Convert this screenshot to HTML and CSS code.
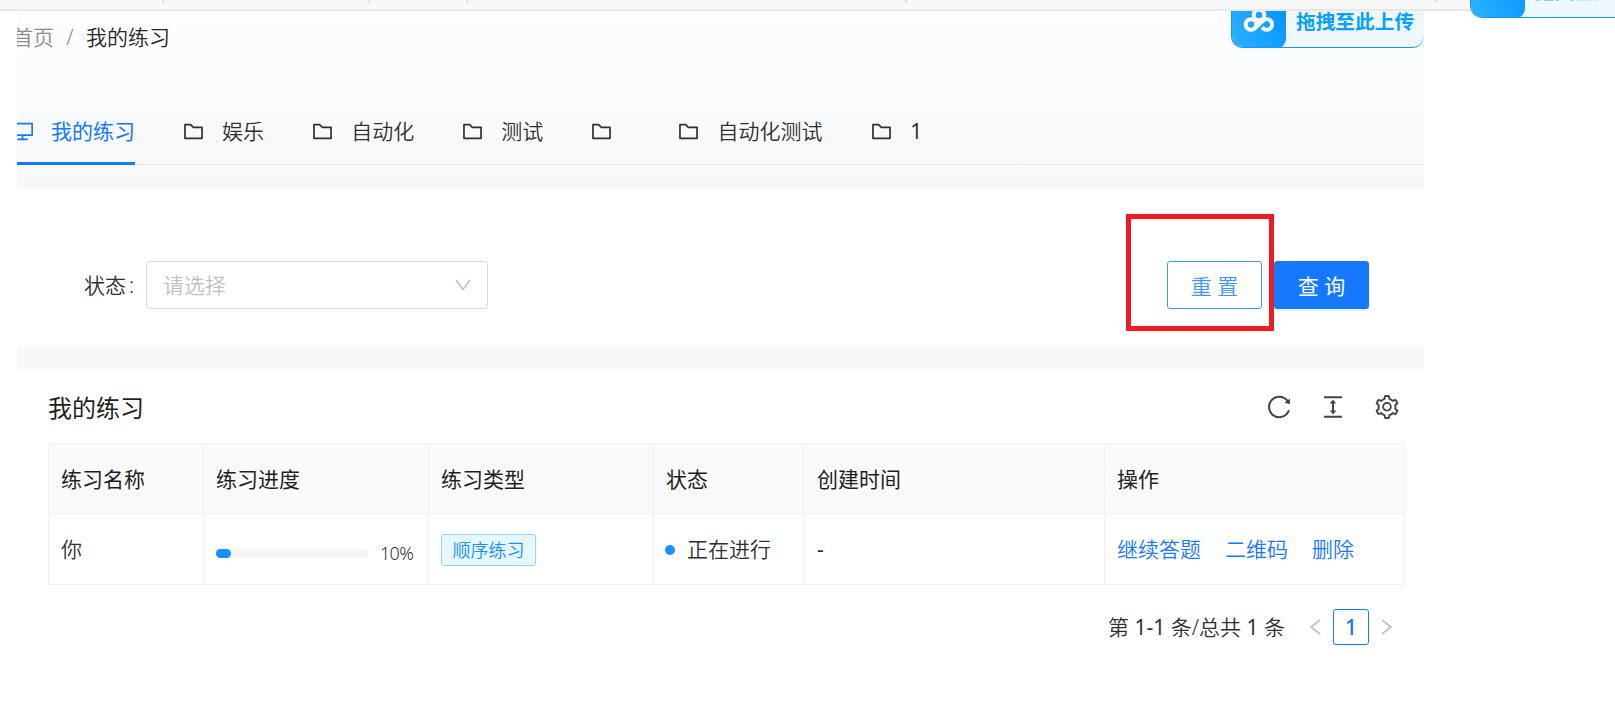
FILE: index.html
```html
<!DOCTYPE html>
<html lang="zh-CN">
<head>
<meta charset="utf-8">
<title>我的练习</title>
<link rel="stylesheet" href="styles.css">
</head>
<body>
<svg width="0" height="0" class="defs">
  <symbol id="folder" viewBox="64 64 896 896"><path d="M880 298.400H521L403.700 186.200a8.150 8.150 0 0 0-5.500-2.200H144c-17.700 0-32 14.300-32 32v592c0 17.700 14.300 32 32 32h736c17.700 0 32-14.300 32-32V330.400c0-17.700-14.300-32-32-32zM840 768H184V256h188.500l119.600 114.400H840V768z"/></symbol>
  <symbol id="cloud" viewBox="0 0 32 26"><g fill="none" stroke="#fff" stroke-width="4"><circle cx="8" cy="17.500" r="5.300"/><circle cx="16" cy="8" r="5.300"/><path d="M11.800 21.300 20 13.700a5.300 5.300 0 1 1 0 7.600l-1-1"/></g></symbol>
</svg>
<header class="strip"><i class="tick t1"></i><i class="tick t2"></i><i class="tick t3"></i><i class="tick t4"></i><i class="tick t5"></i></header>
<div class="upload outer"><span class="tile"><svg><use href="#cloud"/></svg></span><span class="uptext">拖拽至此上传</span></div>
<main class="page">
  <section class="head">
    <div class="upload inner"><span class="tile"><svg><use href="#cloud"/></svg></span><span class="uptext">拖拽至此上传</span></div>
    <nav class="crumb"><span>首页</span><span class="slash">/</span><b>我的练习</b></nav>
    <div class="tabs">
      <div class="tab active"><svg viewBox="64 64 896 896"><path d="M928 140H96c-17.700 0-32 14.300-32 32v496c0 17.700 14.300 32 32 32h380v112H304c-8.800 0-16 7.200-16 16v48c0 4.400 3.600 8 8 8h432c4.400 0 8-3.600 8-8v-48c0-8.800-7.200-16-16-16H548V700h380c17.700 0 32-14.300 32-32V172c0-17.700-14.300-32-32-32zm-40 488H136V212h752v416z"/></svg><span>我的练习</span></div>
      <div class="tab"><svg><use href="#folder"/></svg><span>娱乐</span></div>
      <div class="tab"><svg><use href="#folder"/></svg><span>自动化</span></div>
      <div class="tab"><svg><use href="#folder"/></svg><span>测试</span></div>
      <div class="tab"><svg><use href="#folder"/></svg><span></span></div>
      <div class="tab"><svg><use href="#folder"/></svg><span>自动化测试</span></div>
      <div class="tab"><svg><use href="#folder"/></svg><span class="num">1</span></div>
    </div>
  </section>
  <section class="filter">
    <label>状态<span class="colon">:</span></label>
    <div class="select"><span>请选择</span><svg viewBox="0 0 16 12"><path d="M1 1 8 10.500 15 1"/></svg></div>
    <div class="buttons"><button class="btn">重 置</button><button class="btn primary">查 询</button><div class="mark"></div></div>
  </section>
  <section class="card">
    <div class="title"><h2>我的练习</h2>
      <div class="tools">
        <svg viewBox="64 64 896 896"><path d="M909.100 209.300l-56.400 44.100C775.800 155.100 656.200 92 521.900 92 290 92 102.300 279.500 102 511.500 101.700 743.700 289.800 932 521.900 932c181.300 0 335.800-115 394.600-276.100 1.500-4.200-.7-8.900-4.900-10.300l-56.700-19.500a8 8 0 0 0-10.100 4.800c-1.800 5-3.800 10-5.900 14.900-17.300 41-42.100 77.800-73.700 109.400A344.770 344.770 0 0 1 655.900 829c-42.300 17.900-87.400 27-133.800 27-46.500 0-91.500-9.100-133.800-27A341.500 341.500 0 0 1 279 755.200a342.160 342.160 0 0 1-73.700-109.400c-17.900-42.400-27-87.400-27-133.900s9.100-91.500 27-133.900c17.300-41 42.100-77.800 73.700-109.400 31.600-31.600 68.400-56.400 109.300-73.800 42.300-17.900 87.400-27 133.800-27 46.500 0 91.500 9.100 133.800 27a341.500 341.500 0 0 1 109.300 73.800c9.900 9.900 19.200 20.400 27.800 31.400l-60.200 47a8 8 0 0 0 3 14.100l175.600 43c5 1.200 9.900-2.600 9.900-7.700l.8-180.900c-.1-6.600-7.800-10.300-13-6.200z"/></svg>
        <svg viewBox="64 64 896 896"><path d="M840 836H184c-4.400 0-8 3.600-8 8v60c0 4.400 3.600 8 8 8h656c4.400 0 8-3.600 8-8v-60c0-4.400-3.600-8-8-8zm0-724H184c-4.400 0-8 3.600-8 8v60c0 4.400 3.600 8 8 8h656c4.400 0 8-3.600 8-8v-60c0-4.400-3.600-8-8-8zM610.800 378c6 0 9.400-7 5.700-11.700L515.700 238.700a7.140 7.140 0 0 0-11.300 0L403.600 366.300a7.230 7.230 0 0 0 5.700 11.700H476v268h-62.800c-6 0-9.400 7-5.700 11.700l100.800 127.500c2.900 3.700 8.500 3.700 11.300 0l100.800-127.500c3.700-4.700.4-11.700-5.700-11.700H548V378h62.800z"/></svg>
        <svg viewBox="64 64 896 896"><path d="M924.800 625.700l-65.500-56c3.100-19 4.700-38.400 4.700-57.800s-1.600-38.800-4.700-57.800l65.500-56a32.030 32.030 0 0 0 9.300-35.200l-.9-2.600a443.740 443.740 0 0 0-79.700-137.900l-1.800-2.100a32.120 32.120 0 0 0-35.100-9.500l-81.300 28.900c-30-24.600-63.500-44-99.700-57.600l-15.700-85a32.050 32.050 0 0 0-25.800-25.700l-2.700-.5c-52.100-9.400-106.900-9.400-159 0l-2.700.5a32.050 32.050 0 0 0-25.800 25.700l-15.800 85.400a351.860 351.860 0 0 0-99 57.400l-81.900-29.100a32 32 0 0 0-35.100 9.500l-1.800 2.100a446.020 446.020 0 0 0-79.700 137.900l-.9 2.600c-4.500 12.500-.8 26.500 9.300 35.200l66.300 56.600c-3.100 18.800-4.600 38-4.600 57.100 0 19.200 1.500 38.400 4.600 57.100L99 625.500a32.030 32.030 0 0 0-9.300 35.200l.9 2.600c18.100 50.400 44.900 96.900 79.700 137.900l1.800 2.100a32.120 32.120 0 0 0 35.100 9.500l81.900-29.100c29.800 24.500 63.100 43.900 99 57.400l15.800 85.400a32.050 32.050 0 0 0 25.800 25.700l2.700.5a449.400 449.400 0 0 0 159 0l2.700-.5a32.050 32.050 0 0 0 25.800-25.700l15.700-85a350 350 0 0 0 99.700-57.600l81.300 28.900a32 32 0 0 0 35.100-9.500l1.800-2.100c34.800-41.100 61.600-87.500 79.700-137.900l.9-2.600c4.500-12.300.8-26.300-9.300-35zM788.300 465.900c2.500 15.100 3.800 30.600 3.800 46.100s-1.300 31-3.800 46.100l-6.600 40.100 74.700 63.900a370.030 370.030 0 0 1-42.600 73.600L721 702.800l-31.400 25.800c-23.900 19.600-50.500 35-79.300 45.800l-38.100 14.300-17.900 97a377.500 377.500 0 0 1-85 0l-17.900-97.200-37.800-14.500c-28.500-10.800-55-26.200-78.700-45.700l-31.400-25.900-93.400 33.200c-17-22.900-31.200-47.600-42.600-73.600l75.500-64.500-6.500-40c-2.400-14.900-3.700-30.300-3.700-45.500 0-15.300 1.200-30.600 3.700-45.500l6.500-40-75.500-64.500c11.300-26.100 25.600-50.700 42.600-73.600l93.400 33.200 31.400-25.900c23.700-19.500 50.200-34.900 78.700-45.700l37.900-14.300 17.900-97.200c28.100-3.200 56.800-3.200 85 0l17.900 97 38.100 14.300c28.700 10.800 55.400 26.200 79.300 45.800l31.400 25.800 92.800-32.900c17 22.900 31.200 47.600 42.600 73.600L781.800 426l6.500 39.900zM512 326c-97.200 0-176 78.800-176 176s78.800 176 176 176 176-78.800 176-176-78.800-176-176-176zm79.200 255.200A111.600 111.600 0 0 1 512 614c-29.900 0-58-11.700-79.200-32.800A111.600 111.600 0 0 1 400 502c0-29.900 11.700-58 32.800-79.200C454 401.600 482.100 390 512 390c29.900 0 58 11.600 79.200 32.800A111.600 111.600 0 0 1 624 502c0 29.900-11.700 58-32.800 79.200z"/></svg>
      </div>
    </div>
    <div class="table">
      <div class="th">练习名称</div><div class="th">练习进度</div><div class="th">练习类型</div><div class="th">状态</div><div class="th">创建时间</div><div class="th">操作</div>
      <div class="td">你</div>
      <div class="td"><div class="progress"><div class="bar"><div class="fill" style="width:10%"></div></div><span>10%</span></div></div>
      <div class="td"><span class="tag">顺序练习</span></div>
      <div class="td"><i class="dot"></i>正在进行</div>
      <div class="td dash">-</div>
      <div class="td links"><a>继续答题</a><a>二维码</a><a>删除</a></div>
    </div>
    <div class="pager"><span class="total">第 <span class="num">1-1</span> 条/总共 <span class="num">1</span> 条</span><svg viewBox="0 0 12 16"><path d="M11 1 2 8l9 7"/></svg><b>1</b><svg viewBox="0 0 12 16"><path d="M1 1l9 7-9 7"/></svg></div>
  </section>
</main>
</body>
</html>
```

FILE: styles.css
```css
* { box-sizing: border-box; }
body { margin: 0; width: 1615px; height: 711px; overflow: hidden; position: relative; background: #fff; color: #303030; font: 350 21px/33px "Noto Sans", "Noto Sans CJK SC", sans-serif; }
.defs { position: absolute; }
.num { font-weight: 400; }
.strip { height: 11px; background: #f8f8f8; border-bottom: 2px solid #e8e8e8; position: relative; }
.tick { position: absolute; top: 0; width: 2px; height: 3px; background: #e2e2e2; }
.t1 { left: 162px; } .t2 { left: 368px; } .t3 { left: 466px; } .t4 { left: 905px; } .t5 { left: 1435px; }
.page { width: 1407px; margin-left: 17px; }
.head { height: 178px; position: relative; overflow: hidden; background: linear-gradient(#fdfdfd, #fafbfd 40%, #f7f8fa); }
.crumb { display: flex; padding-top: 10px; margin-left: -5px; color: #8c8c8c; }
.crumb b { font-weight: inherit; color: #262626; }
.slash { width: 32px; text-align: center; }
.tabs { display: flex; gap: 48.100px; height: 69px; margin-top: 42px; margin-left: -5px; border-bottom: 1px solid #e6e7ea; }
.tab { display: flex; gap: 18px; align-items: center; height: 69px; padding-top: 2px; flex: none; }
.tab:last-child { margin-left: .6px; }
.tab svg { width: 21px; height: 21px; fill: currentColor; }
.tab.active { color: #1677ff; font-weight: 400; border-bottom: 3px solid #1677ff; padding-top: 4px; }
.upload { position: absolute; width: 197px; height: 54px; display: flex; background: #eff8ff; border: 1px solid #1296fb; border-radius: 12px; overflow: hidden; align-items: center; }
.upload.inner { left: 1214px; top: -17px; width: 193px; border-right: 0; }
.upload.outer { left: 1470px; top: -36px; }
.tile { width: 54px; height: 54px; flex: none; background: linear-gradient(60deg, #2fb2ff, #0090ff); border-radius: 0 0 9px 9px; display: flex; justify-content: center; align-items: center; padding-bottom: 3px; }
.tile svg { width: 32px; height: 26px; }
.outer .tile { padding-bottom: 8px; }
.outer .tile svg { opacity: .5; }
.uptext { margin-left: 10px; padding-top: 1px; color: #06a0ff; font-weight: 700; font-size: 19.700px; white-space: nowrap; }
.outer .uptext { padding: 0; opacity: .5; }
.filter { height: 157px; display: flex; padding: 72px 55px 0 67px; }
.filter label { width: 62px; line-height: 49px; white-space: nowrap; }
.colon { margin-left: 3px; }
.select { width: 342px; height: 48px; border: 1px solid #d9d9d9; border-radius: 3px; padding: 0 16px; display: flex; align-items: center; justify-content: space-between; color: #bfbfbf; }
.select svg { width: 16px; height: 12px; fill: none; stroke: #bfbfbf; stroke-width: 1.600; }
.buttons { margin-left: auto; display: flex; gap: 12px; position: relative; height: 48px; }
.btn { width: 95px; height: 48px; padding: 2px 0 0; font: inherit; border: 1px solid #4096ff; border-radius: 3px; background: #fff; color: #4096ff; }
.btn.primary { background: #1677ff; border-color: #1677ff; color: #fff; font-weight: 400; box-shadow: 0 2px 0 rgba(5, 145, 255, .1); }
.mark { position: absolute; left: -41px; top: -47px; width: 148px; height: 117px; border: 5px solid #ed1c24; }
.card { border-top: 24px solid #f7f8fa; padding: 0 19px 0 31px; }
.title { height: 73px; display: flex; align-items: center; justify-content: space-between; padding: 1px 6px 0 0; }
h2 { margin: 0; font-size: 24px; font-weight: 400; color: #1f1f1f; }
.tools { display: flex; gap: 30px; }
.tools svg { width: 24px; height: 24px; fill: #444; }
.table { display: grid; grid-template-columns: 155px 225px 225px 150px 301px 300px; grid-template-rows: 71px 71px; border-left: 1px solid #f0f0f0; margin-bottom: 24px; width: 1357px; border-radius: 3px 3px 0 0; }
.th, .td { display: flex; align-items: center; padding: 1px 0 0 12px; border-right: 1px solid #f0f0f0; border-bottom: 1px solid #f0f0f0; }
.th { background: #fafafa; border-top: 1px solid #f0f0f0; color: #1f1f1f; font-weight: 400; }
.th:nth-child(5) { padding-left: 13px; }
.td.dash { padding-left: 13px; font-weight: 400; }
.progress { display: flex; align-items: center; gap: 13px; font-size: 18px; margin-top: 8px; }
.bar { width: 152px; height: 9px; border-radius: 5px; background: #f5f5f5; }
.fill { height: 9px; border-radius: 5px; background: #1890ff; }
.progress span { letter-spacing: -.7px; margin-left: -1px; }
.tag { height: 32px; width: 95px; margin-top: 1px; text-align: center; font-size: 18px; line-height: 31px; border: 1px solid #91d5ff; border-radius: 3px; background: #e6f7ff; color: #1890ff; }
.dot { width: 10px; height: 10px; border-radius: 50%; background: #1890ff; margin: 1px 12px 0 -1px; }
.links { gap: 24px; color: #1677ff; }
.pager { display: flex; align-items: center; justify-content: flex-end; height: 36px; padding-right: 12px; }
.pager svg { width: 12px; height: 16px; fill: none; stroke: #bfbfbf; stroke-width: 1.600; }
.total { margin-right: 24px; padding-top: 1px; }
.pager b { width: 36px; height: 36px; margin: 0 12px; padding-top: 1px; border: 1px solid #1677ff; border-radius: 3px; text-align: center; font-weight: 500; color: #1677ff; }
```
